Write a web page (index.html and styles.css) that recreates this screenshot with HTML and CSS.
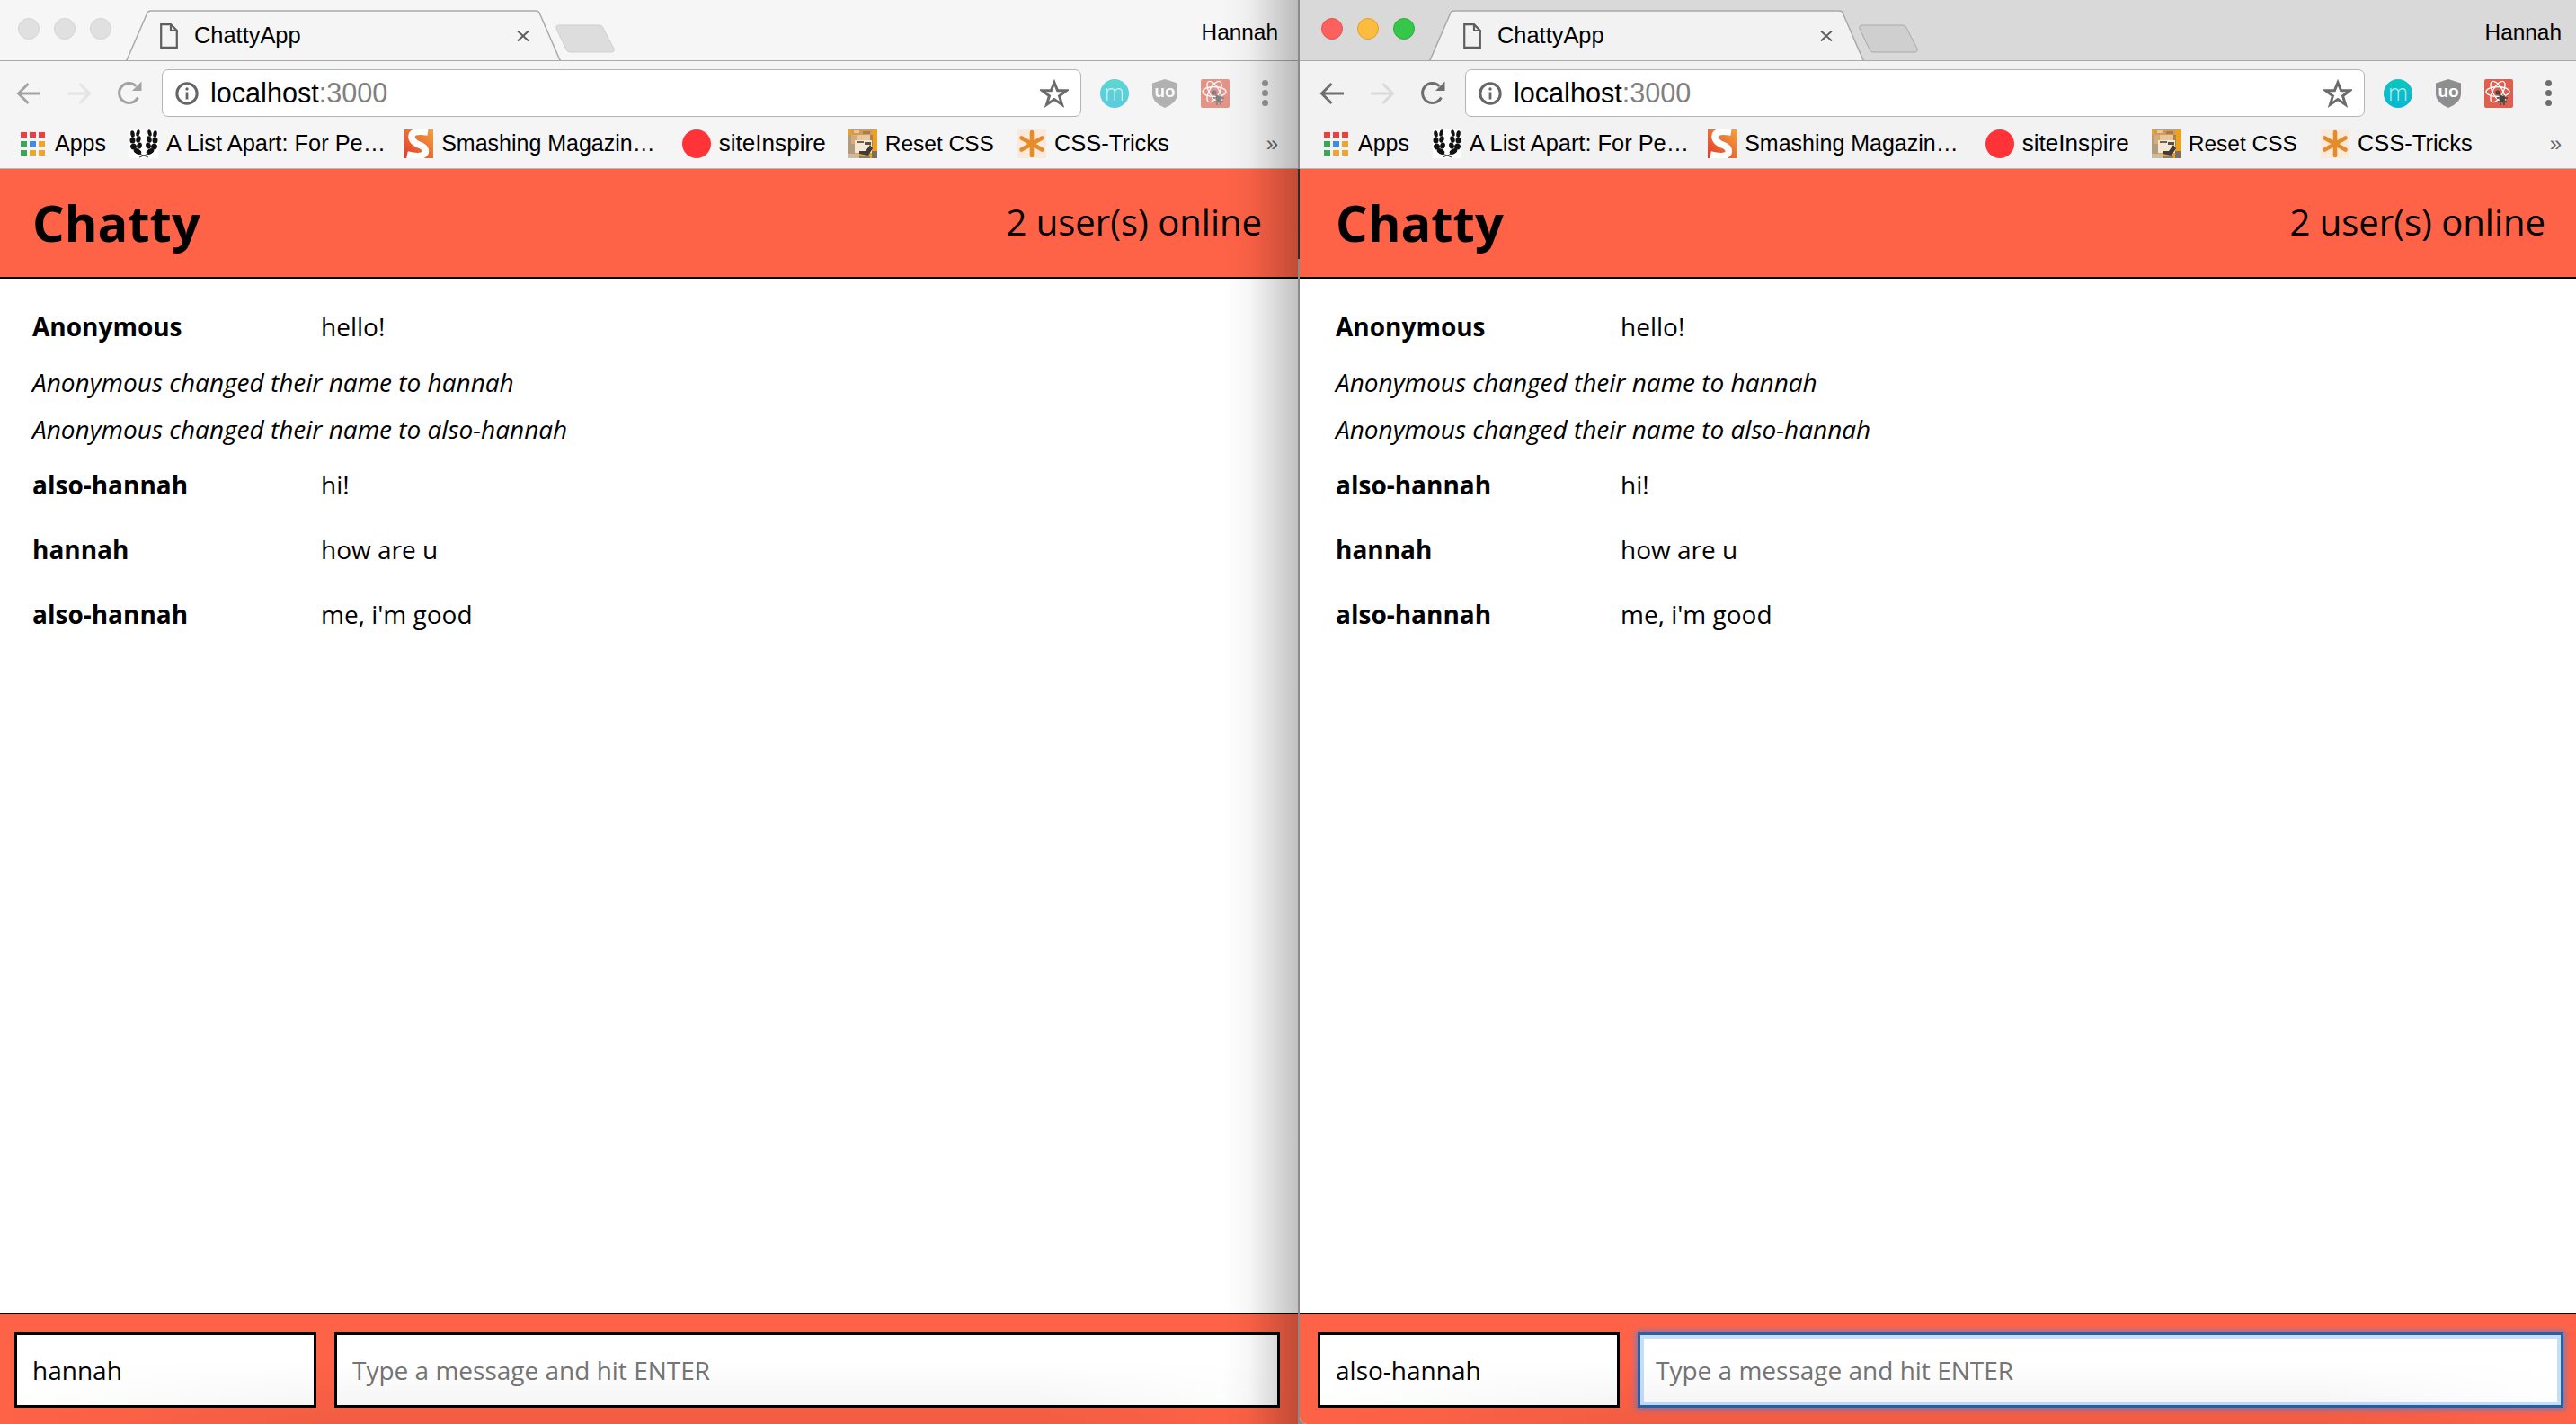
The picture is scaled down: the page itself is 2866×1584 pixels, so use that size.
FILE: index.html
```html
<!DOCTYPE html>
<html lang="en">
<head>
  <meta charset="UTF-8">
  <title>ChattyApp</title>
  <link rel="stylesheet" href="styles.css">
</head>
<body>
  <svg class="sprites" aria-hidden="true">
    <defs>
      <linearGradient id="smash" x1="1" y1="0" x2="0" y2="1">
        <stop offset="0" stop-color="#f2a33c"/>
        <stop offset="1" stop-color="#e3392a"/>
      </linearGradient>
    </defs>
    <symbol id="i-tab" viewBox="0 0 484 57" preserveAspectRatio="none">
      <path class="tab-shape" d="M0 56H1L24 3Q25 1 28 1H456Q459 1 460 3L483 56H484"/>
    </symbol>
    <symbol id="i-newtab" viewBox="0 0 66 32">
      <path class="newtab-shape" d="M4 1H49Q52 1 53 4L65 27Q66 31 62 31H16Q13 31 12 28L1 5Q0 1 4 1Z"/>
    </symbol>
    <symbol id="i-file" viewBox="0 0 20 28">
      <path d="M1.2 1.2H12L18.8 8V26.8H1.2ZM12 1.2V8H18.8" fill="none" stroke="currentColor" stroke-width="2.2"/>
    </symbol>
    <symbol id="i-close" viewBox="0 0 14 12">
      <path d="M1 0.5L13 11.5M13 0.5L1 11.5" fill="none" stroke="currentColor" stroke-width="2"/>
    </symbol>
    <symbol id="i-back" viewBox="0 0 28 26">
      <path d="M27 13H3M13.5 2L2.5 13L13.5 24" fill="none" stroke="currentColor" stroke-width="3"/>
    </symbol>
    <symbol id="i-forward" viewBox="0 0 28 26">
      <path d="M1 13H25M14.5 2L25.5 13L14.5 24" fill="none" stroke="currentColor" stroke-width="3"/>
    </symbol>
    <symbol id="i-reload" viewBox="0 0 28 28">
      <path d="M23.4 18.5A11 11 0 1 1 21.5 5.8" fill="none" stroke="currentColor" stroke-width="3"/>
      <path d="M17 11H27.5V0.5Z" fill="currentColor"/>
    </symbol>
    <symbol id="i-info" viewBox="0 0 26 26">
      <circle cx="13" cy="13" r="11.2" fill="none" stroke="currentColor" stroke-width="3"/>
      <circle cx="13" cy="8" r="1.7" fill="currentColor"/>
      <path d="M13 11.5V19.5" stroke="currentColor" stroke-width="2.8"/>
    </symbol>
    <symbol id="i-star" viewBox="0 0 30 30">
      <path d="M15 3.5L18.4 12H27.5L20.2 17.6L23 26.6L15 21.2L7 26.6L9.8 17.6L2.5 12H11.6Z" fill="none" stroke="currentColor" stroke-width="2.8"/>
    </symbol>
    <symbol id="i-shield" viewBox="0 0 28 32">
      <path d="M14 0L28 4.5V17Q28 26 14 32Q0 26 0 17V4.5Z" fill="currentColor"/>
    </symbol>
    <symbol id="i-react" viewBox="0 0 32 32">
      <rect width="32" height="32" rx="2" fill="currentColor"/>
      <g fill="none" stroke="#fff" stroke-width="1.3">
        <ellipse cx="15" cy="14" rx="13" ry="5.5"/>
        <ellipse cx="15" cy="14" rx="13" ry="5.5" transform="rotate(60 15 14)"/>
        <ellipse cx="15" cy="14" rx="13" ry="5.5" transform="rotate(120 15 14)"/>
      </g>
      <circle cx="15" cy="15" r="2.6" fill="#444"/>
      <path d="M16 17L24 20L21 27L18 25Z" fill="#444"/>
      <path d="M14 21H26M15 25H25M18 18V29M22 18V29" stroke="#444" stroke-width="1.4"/>
    </symbol>
    <symbol id="i-apps" viewBox="0 0 27 26">
      <rect width="7" height="6" fill="#ef3e3c"/>
      <rect x="10" width="7" height="6" fill="#ef3e3c"/>
      <rect x="20" width="7" height="6" fill="#ef3e3c"/>
      <rect y="10" width="7" height="6" fill="#3aa757"/>
      <rect x="10" y="10" width="7" height="6" fill="#3b8cf0"/>
      <rect x="20" y="10" width="7" height="6" fill="#f2a428"/>
      <rect y="20" width="7" height="6" fill="#3aa757"/>
      <rect x="10" y="20" width="7" height="6" fill="#f2a428"/>
      <rect x="20" y="20" width="7" height="6" fill="#f2a428"/>
    </symbol>
    <symbol id="i-ala" viewBox="0 0 32 32">
      <rect width="32" height="32" fill="#fff"/>
      <g fill="#111">
        <ellipse cx="3.5" cy="5" rx="2.2" ry="3.8" transform="rotate(-10 3.5 5)"/>
        <ellipse cx="9.5" cy="4" rx="2" ry="3.8" transform="rotate(15 9.5 4)"/>
        <ellipse cx="3.5" cy="12" rx="3" ry="3.6"/>
        <ellipse cx="10" cy="11" rx="2.6" ry="3.8" transform="rotate(15 10 11)"/>
        <ellipse cx="4.5" cy="19" rx="3.4" ry="3.4" transform="rotate(-30 4.5 19)"/>
        <ellipse cx="11" cy="18" rx="2.8" ry="3.6" transform="rotate(15 11 18)"/>
        <ellipse cx="9" cy="24.5" rx="4.6" ry="2.8" transform="rotate(30 9 24.5)"/>
        <ellipse cx="28.5" cy="5" rx="2.2" ry="3.8" transform="rotate(10 28.5 5)"/>
        <ellipse cx="22.5" cy="4" rx="2" ry="3.8" transform="rotate(-15 22.5 4)"/>
        <ellipse cx="28.5" cy="12" rx="3" ry="3.6"/>
        <ellipse cx="22" cy="11" rx="2.6" ry="3.8" transform="rotate(-15 22 11)"/>
        <ellipse cx="27.5" cy="19" rx="3.4" ry="3.4" transform="rotate(30 27.5 19)"/>
        <ellipse cx="21" cy="18" rx="2.8" ry="3.6" transform="rotate(-15 21 18)"/>
        <ellipse cx="23" cy="24.5" rx="4.6" ry="2.8" transform="rotate(-30 23 24.5)"/>
      </g>
      <path d="M11 31L21 27M21 31L11 27" stroke="#333" stroke-width="1"/>
    </symbol>
    <symbol id="i-smashing" viewBox="0 0 32 32">
      <rect width="32" height="32" fill="url(#smash)"/>
      <path d="M26 3Q7 0 8 9Q9 14 16 17Q25 20 23 26Q20 32 3 28" fill="none" stroke="#fff" stroke-width="7.5"/>
    </symbol>
    <symbol id="i-reset" viewBox="0 0 32 32">
      <rect width="32" height="32" fill="#eea21c"/>
      <rect x="3" width="23" height="6" fill="#cf9a5f"/>
      <rect x="6" y="1" width="6" height="3" fill="#eec48f"/>
      <rect x="16" y="2" width="8" height="3" fill="#a97c4a"/>
      <rect y="6" width="7" height="26" fill="#b39c7e"/>
      <rect x="3" y="6" width="6" height="10" fill="#d8ac76"/>
      <rect x="9" y="6" width="15" height="6" fill="#e9c79c"/>
      <rect x="24" y="6" width="3" height="12" fill="#a9824f"/>
      <rect x="7" y="12" width="19" height="14" fill="#f5e7d6"/>
      <rect x="9" y="13" width="8" height="2" fill="#6f5f50"/>
      <rect x="18" y="14" width="7" height="3" fill="#5a5048"/>
      <path d="M24 17L27 21L22 29L12 27L12 24L19 24Z" fill="#403b36"/>
      <rect y="27" width="12" height="5" fill="#cbbba3"/>
      <rect x="12" y="29" width="12" height="3" fill="#8a7d6c"/>
      <rect x="26" y="24" width="6" height="8" fill="#7c6f5e"/>
    </symbol>
    <symbol id="i-tricks" viewBox="0 0 32 32">
      <rect width="32" height="32" fill="#fbeadb"/>
      <path d="M16 3V29M4.5 9.5L27.5 22.5M27.5 9.5L4.5 22.5" stroke="#e58b29" stroke-width="4.6" stroke-linecap="round"/>
    </symbol>
  </svg>

  <div class="screen">
    <section class="window window-inactive">
      <div class="tabstrip">
        <div class="lights">
          <span class="light light-red"></span>
          <span class="light light-yellow"></span>
          <span class="light light-green"></span>
        </div>
        <div class="tab">
          <svg class="tab-bg"><use href="#i-tab"/></svg>
          <svg class="tab-file"><use href="#i-file"/></svg>
          <span class="tab-title">ChattyApp</span>
          <svg class="tab-close"><use href="#i-close"/></svg>
        </div>
        <svg class="newtab"><use href="#i-newtab"/></svg>
        <span class="profile">Hannah</span>
      </div>
      <div class="toolbar">
        <svg class="nav nav-on"><use href="#i-back"/></svg>
        <svg class="nav nav-off"><use href="#i-forward"/></svg>
        <svg class="nav nav-on"><use href="#i-reload"/></svg>
        <div class="omnibox">
          <svg class="omni-info"><use href="#i-info"/></svg>
          <span class="omni-url">localhost<span class="omni-port">:3000</span></span>
          <svg class="omni-star"><use href="#i-star"/></svg>
        </div>
        <div class="extensions">
          <span class="ext ext-m">m</span>
          <svg class="ext ext-shield" viewBox="0 0 28 32"><use href="#i-shield"/><text x="14" y="20" text-anchor="middle" class="shield-text">uo</text></svg>
          <svg class="ext ext-react"><use href="#i-react"/></svg>
          <span class="menu-dots"><i></i><i></i><i></i></span>
        </div>
      </div>
      <div class="bookmarks">
        <span class="bookmark bm-apps"><svg class="bm-icon"><use href="#i-apps"/></svg>Apps</span>
        <span class="bookmark bm-ala"><svg class="bm-icon"><use href="#i-ala"/></svg>A List Apart: For Pe…</span>
        <span class="bookmark bm-smashing"><svg class="bm-icon"><use href="#i-smashing"/></svg>Smashing Magazin…</span>
        <span class="bookmark bm-site"><span class="bm-dot"></span>siteInspire</span>
        <span class="bookmark bm-reset"><svg class="bm-icon"><use href="#i-reset"/></svg>Reset CSS</span>
        <span class="bookmark bm-tricks"><svg class="bm-icon"><use href="#i-tricks"/></svg>CSS-Tricks</span>
        <span class="bm-more">»</span>
      </div>
      <div class="chat">
        <header class="chat-head">
          <h1>Chatty</h1>
          <span class="online">2 user(s) online</span>
        </header>
        <main class="messages">
          <div class="msg"><span class="msg-user">Anonymous</span><span>hello!</span></div>
          <div class="sys">Anonymous changed their name to hannah</div>
          <div class="sys">Anonymous changed their name to also-hannah</div>
          <div class="msg"><span class="msg-user">also-hannah</span><span>hi!</span></div>
          <div class="msg"><span class="msg-user">hannah</span><span>how are u</span></div>
          <div class="msg"><span class="msg-user">also-hannah</span><span>me, i'm good</span></div>
        </main>
        <footer class="chat-bar">
          <input class="chat-name" type="text" value="hannah">
          <input class="chat-input" type="text" placeholder="Type a message and hit ENTER">
        </footer>
      </div>
    </section>

    <div class="divider"></div>

    <section class="window window-active">
      <div class="tabstrip">
        <div class="lights">
          <span class="light light-red"></span>
          <span class="light light-yellow"></span>
          <span class="light light-green"></span>
        </div>
        <div class="tab">
          <svg class="tab-bg"><use href="#i-tab"/></svg>
          <svg class="tab-file"><use href="#i-file"/></svg>
          <span class="tab-title">ChattyApp</span>
          <svg class="tab-close"><use href="#i-close"/></svg>
        </div>
        <svg class="newtab"><use href="#i-newtab"/></svg>
        <span class="profile">Hannah</span>
      </div>
      <div class="toolbar">
        <svg class="nav nav-on"><use href="#i-back"/></svg>
        <svg class="nav nav-off"><use href="#i-forward"/></svg>
        <svg class="nav nav-on"><use href="#i-reload"/></svg>
        <div class="omnibox">
          <svg class="omni-info"><use href="#i-info"/></svg>
          <span class="omni-url">localhost<span class="omni-port">:3000</span></span>
          <svg class="omni-star"><use href="#i-star"/></svg>
        </div>
        <div class="extensions">
          <span class="ext ext-m">m</span>
          <svg class="ext ext-shield" viewBox="0 0 28 32"><use href="#i-shield"/><text x="14" y="20" text-anchor="middle" class="shield-text">uo</text></svg>
          <svg class="ext ext-react"><use href="#i-react"/></svg>
          <span class="menu-dots"><i></i><i></i><i></i></span>
        </div>
      </div>
      <div class="bookmarks">
        <span class="bookmark bm-apps"><svg class="bm-icon"><use href="#i-apps"/></svg>Apps</span>
        <span class="bookmark bm-ala"><svg class="bm-icon"><use href="#i-ala"/></svg>A List Apart: For Pe…</span>
        <span class="bookmark bm-smashing"><svg class="bm-icon"><use href="#i-smashing"/></svg>Smashing Magazin…</span>
        <span class="bookmark bm-site"><span class="bm-dot"></span>siteInspire</span>
        <span class="bookmark bm-reset"><svg class="bm-icon"><use href="#i-reset"/></svg>Reset CSS</span>
        <span class="bookmark bm-tricks"><svg class="bm-icon"><use href="#i-tricks"/></svg>CSS-Tricks</span>
        <span class="bm-more">»</span>
      </div>
      <div class="chat">
        <header class="chat-head">
          <h1>Chatty</h1>
          <span class="online">2 user(s) online</span>
        </header>
        <main class="messages">
          <div class="msg"><span class="msg-user">Anonymous</span><span>hello!</span></div>
          <div class="sys">Anonymous changed their name to hannah</div>
          <div class="sys">Anonymous changed their name to also-hannah</div>
          <div class="msg"><span class="msg-user">also-hannah</span><span>hi!</span></div>
          <div class="msg"><span class="msg-user">hannah</span><span>how are u</span></div>
          <div class="msg"><span class="msg-user">also-hannah</span><span>me, i'm good</span></div>
        </main>
        <footer class="chat-bar">
          <input class="chat-name" type="text" value="also-hannah">
          <input class="chat-input is-focused" type="text" placeholder="Type a message and hit ENTER">
        </footer>
      </div>
    </section>
  </div>
</body>
</html>
```
FILE: styles.css
```css
body {
  margin: 0;
  overflow: hidden;
  font-family: "Liberation Sans", Arial, sans-serif;
  color: #000;
}

.sprites {
  position: absolute;
  width: 0;
  height: 0;
}

.screen {
  display: flex;
  height: 100vh;
  background: #8a8a8a;
}

.divider {
  width: 2px;
  background: linear-gradient(#8a8a8a 188px, #2a2a2a 188px, #2a2a2a 288px, #8a8a8a 288px);
}

/* each window sits a bit differently on the screen */
.window {
  position: relative;
  display: flex;
  flex-direction: column;
  overflow: hidden;
}

.window-inactive {
  width: 1444px;
  --inset-l: 0px;
  --inset-r: 6px;
  --name-col: 321px;
  --strip: #f6f6f6;
  --bar: #f5f5f5;
  --nav-on: #a3a3a3;
  --nav-off: #e4e4e4;
  --newtab: #dddddd;
  --newtab-line: #cfcfcf;
}

.window-active {
  flex: 1;
  border-bottom-left-radius: 8px;
  --inset-l: 4px;
  --inset-r: 0px;
  --name-col: 317px;
  --strip: #dad9da;
  --bar: #f2f2f2;
  --nav-on: #6e6e6e;
  --nav-off: #d9d9d9;
  --newtab: #cfcfcf;
  --newtab-line: #a9a9a9;
}

/* shadow the front window throws on the back one */
.window-inactive::after {
  content: "";
  position: absolute;
  top: 0;
  right: 0;
  bottom: 0;
  width: 84px;
  background: linear-gradient(to right, rgba(0, 0, 0, 0), rgba(0, 0, 0, 0.03) 35%, rgba(0, 0, 0, 0.24));
  pointer-events: none;
}

/* tab strip */
.tabstrip {
  display: flex;
  align-items: flex-start;
  height: 68px;
  box-sizing: border-box;
  padding: 0 calc(16px + var(--inset-r)) 0 calc(20px + var(--inset-l));
  background: var(--strip);
  border-bottom: 1px solid #a9a9a9;
}

.lights {
  display: flex;
  gap: 16px;
  margin-top: 20px;
}

.light {
  width: 24px;
  height: 24px;
  box-sizing: border-box;
  border-radius: 50%;
  background: #e0e0e0;
  border: 1px solid #d4d4d4;
}

.window-active .light-red {
  background: #fc615d;
  border-color: #e2524e;
}

.window-active .light-yellow {
  background: #fdbc40;
  border-color: #dfa023;
}

.window-active .light-green {
  background: #34c749;
  border-color: #2aac3c;
}

.tab {
  position: relative;
  display: flex;
  align-items: center;
  width: 484px;
  height: 57px;
  box-sizing: border-box;
  margin: 11px 0 0 16px;
  padding: 0 35px 0 38px;
  font-size: 25.4px;
}

.tab-bg {
  position: absolute;
  left: 0;
  top: 0;
  width: 100%;
  height: 100%;
}

.tab-shape {
  fill: var(--bar);
  stroke: #a9a9a9;
  stroke-width: 1.5;
}

.tab-file {
  position: relative;
  width: 20px;
  height: 28px;
  color: #5f5f5f;
}

.tab-title {
  position: relative;
  margin-left: 18px;
}

.tab-close {
  position: relative;
  width: 14px;
  height: 12px;
  margin-left: auto;
  color: #5f5f5f;
}

.newtab {
  width: 66px;
  height: 32px;
  margin: 27px 0 0 -6px;
}

.newtab-shape {
  fill: var(--newtab);
  stroke: var(--newtab-line);
  stroke-width: 1;
}

.profile {
  margin: 22px 0 0 auto;
  font-size: 24.4px;
}

/* toolbar */
.toolbar {
  display: flex;
  align-items: center;
  height: 72px;
  box-sizing: border-box;
  padding: 8px calc(27px + var(--inset-r)) 9px calc(18px + var(--inset-l));
  background: var(--bar);
}

.nav {
  width: 28px;
  height: 28px;
  margin-right: 28px;
  color: var(--nav-on);
}

.nav-off {
  color: var(--nav-off);
}

.toolbar .nav:nth-child(3) {
  margin-right: 22px;
}

.omnibox {
  flex: 1;
  display: flex;
  align-items: center;
  height: 53px;
  box-sizing: border-box;
  padding: 0 13px 0 14px;
  background: #fff;
  border: 1px solid #b4b4b4;
  border-radius: 7px;
}

.omni-info {
  width: 26px;
  height: 26px;
  color: #666;
}

.omni-url {
  margin-left: 13px;
  font-size: 30.6px;
}

.omni-port {
  color: #808080;
}

.omni-star {
  width: 32px;
  height: 32px;
  margin-left: auto;
  color: #6b6b6b;
}

.extensions {
  display: flex;
  align-items: center;
  margin-left: 21px;
}

.ext {
  flex: none;
  height: 32px;
}

.ext-m {
  width: 32px;
  border-radius: 50%;
  background: linear-gradient(#0cc5c0, #0ab6d4);
  color: rgba(255, 255, 255, 0.72);
  font: 300 25px/28px "Open Sans", sans-serif;
  text-align: center;
}

.ext-shield {
  width: 28px;
  margin-left: 26px;
  color: #8e8e8e;
}

.shield-text {
  font: bold 19px "Liberation Sans", sans-serif;
  fill: #fff;
}

.ext-react {
  width: 32px;
  margin-left: 26px;
  color: #dc5f4f;
}

.window-inactive .ext {
  opacity: 0.65;
}

.menu-dots {
  display: flex;
  flex-direction: column;
  gap: 4px;
  margin-left: 36px;
}

.menu-dots i {
  width: 7px;
  height: 7px;
  border-radius: 50%;
  background: #6e6e6e;
}

.window-inactive .menu-dots i {
  background: #999;
}

/* bookmarks */
.bookmarks {
  display: flex;
  align-items: center;
  height: 48px;
  box-sizing: border-box;
  padding: 0 calc(16px + var(--inset-r)) 8px calc(23px + var(--inset-l));
  background: var(--bar);
  font-size: 25px;
  border-bottom: 1px solid #b9b9b9;
}

.bookmark {
  display: flex;
  align-items: center;
  gap: 9px;
  white-space: nowrap;
}

.bm-icon {
  width: 32px;
  height: 32px;
}

.bm-dot {
  width: 32px;
  height: 32px;
  border-radius: 50%;
  background: #ff3338;
}

.bm-apps {
  gap: 11px;
}

.bm-apps .bm-icon {
  width: 27px;
  height: 26px;
}

.bm-ala {
  margin-left: 26px;
  font-size: 25.4px;
}

.bm-smashing {
  margin-left: 21px;
}

.bm-site {
  margin-left: 30px;
  font-size: 26.1px;
}

.bm-reset {
  margin-left: 25px;
  font-size: 24.5px;
}

.bm-reset .bm-icon {
  filter: blur(0.5px);
}

.bm-tricks {
  margin-left: 26px;
  font-size: 25.5px;
}

.bm-more {
  margin-left: auto;
  color: #666;
  font-size: 24px;
}

/* the chat page itself */
.chat {
  position: relative;
  flex: 1;
  display: flex;
  flex-direction: column;
  font-family: "Open Sans", sans-serif;
  font-size: 28px;
  background: #fff;
}

/* soft desktop shadow along the bottom of the page */
.chat::after {
  content: "";
  position: absolute;
  left: 0;
  right: 0;
  bottom: 0;
  height: 70px;
  background: linear-gradient(to right, rgba(0, 0, 0, 0), rgba(0, 0, 0, 0.055) 25%, rgba(0, 0, 0, 0.055) 80%, rgba(0, 0, 0, 0));
  -webkit-mask-image: linear-gradient(to bottom, transparent, #000);
  mask-image: linear-gradient(to bottom, transparent, #000);
  pointer-events: none;
}

.chat-head {
  display: flex;
  align-items: center;
  justify-content: space-between;
  height: 122px;
  box-sizing: border-box;
  padding: 0 calc(34px + var(--inset-r)) 2px calc(36px + var(--inset-l));
  background: #ff6347;
  border-bottom: 2px solid #000;
}

.chat-head h1 {
  margin: 0;
  font-size: 56px;
  font-weight: 700;
}

.online {
  margin-bottom: 2px;
  font-size: 40px;
}

.messages {
  flex: 1;
  padding: 17px calc(34px + var(--inset-r)) 0 calc(36px + var(--inset-l));
}

.msg {
  display: flex;
  align-items: center;
  height: 72px;
}

.msg-user {
  width: var(--name-col);
  font-weight: 700;
}

.sys {
  display: flex;
  align-items: center;
  height: 52px;
  font-style: italic;
}

.chat-bar {
  display: flex;
  gap: 20px;
  height: 124px;
  box-sizing: border-box;
  padding: 20px calc(14px + var(--inset-r)) 18px calc(16px + var(--inset-l));
  background: #ff6347;
  border-top: 2px solid #000;
}

.chat-bar input {
  height: 84px;
  box-sizing: border-box;
  padding: 0 17px;
  border: 3px solid #000;
  border-radius: 0;
  background: #fff;
  color: #000;
  font: inherit;
  outline: none;
}

.chat-bar input::placeholder {
  color: #757575;
  opacity: 1;
}

.chat-name {
  width: 336px;
}

.chat-input {
  flex: 1;
  min-width: 0;
}

.chat-bar .is-focused {
  border-color: #2a5fa6;
  box-shadow: inset 0 0 0 4px #c6dff8, 0 0 6px 2px rgba(76, 128, 224, 0.7);
}
```
